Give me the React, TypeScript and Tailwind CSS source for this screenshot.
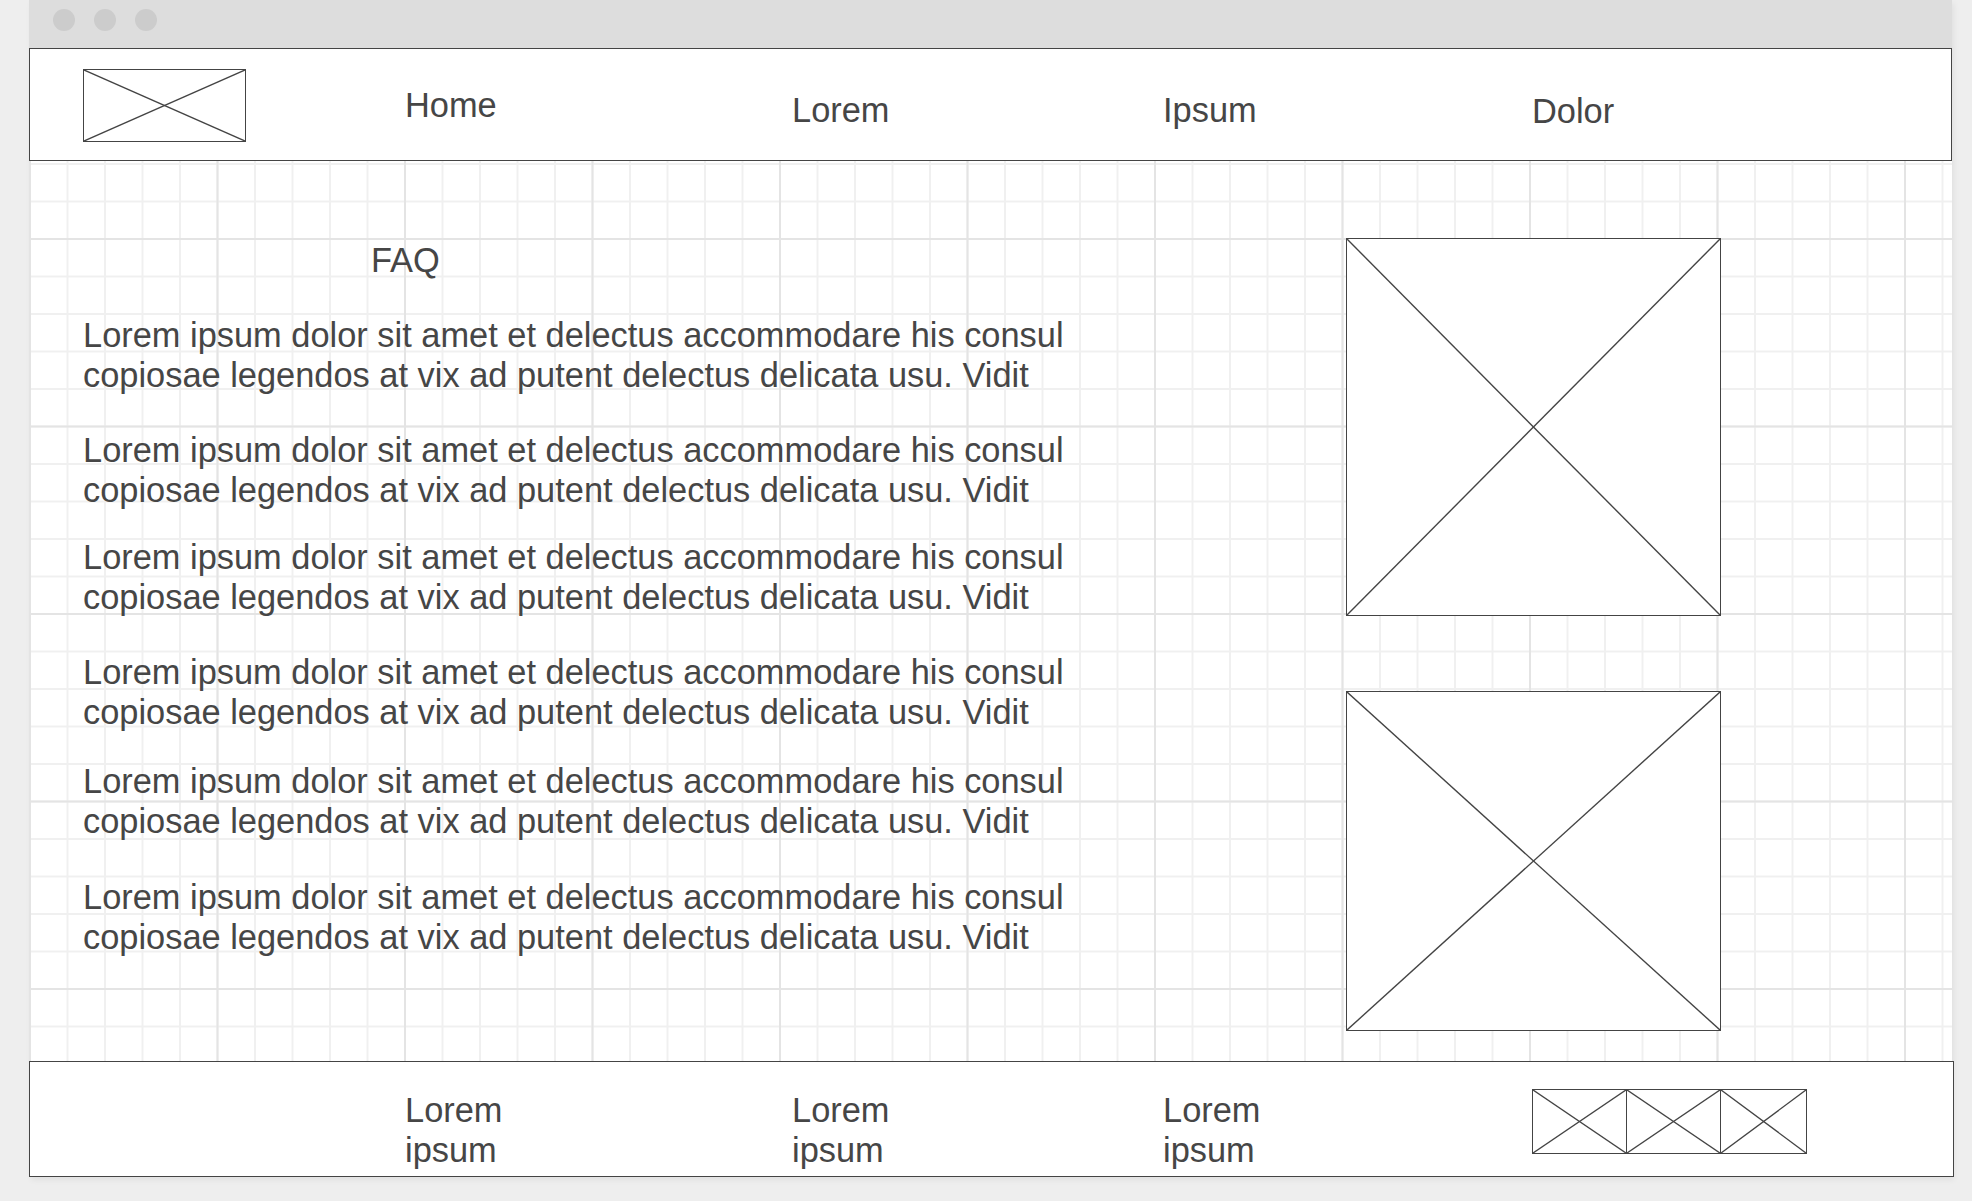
import React from 'react';

// Wireframe placeholder: a box with a cross through it
function XBox({ className = '' }: { className?: string }) {
  return (
    <div className={'border border-[#444444] bg-white ' + className}>
      <svg viewBox="0 0 100 100" preserveAspectRatio="none" className="block h-full w-full">
        <line x1="0" y1="0" x2="100" y2="100" stroke="#444444" strokeWidth="1.4" vectorEffect="non-scaling-stroke" />
        <line x1="100" y1="0" x2="0" y2="100" stroke="#444444" strokeWidth="1.4" vectorEffect="non-scaling-stroke" />
      </svg>
    </div>
  );
}

const paragraphs = [
  'mt-[35px]',
  'mt-[35px]',
  'mt-[27px]',
  'mt-[35px]',
  'mt-[29px]',
  'mt-[36px]',
];

export default function App() {
  return (
    <div className="min-h-screen w-full bg-[#eeeeee] pb-[25px] font-['Liberation_Sans',Arial,sans-serif] text-[34.4px] leading-[40px] text-[#464646]">
      <div className="ml-[29px] w-[1923px] shadow-[2px_3px_6px_rgba(0,0,0,0.06)]">
        {/* Browser title bar */}
        <div className="flex h-[48px] items-start gap-[19px] bg-[#dddddd] pl-[24px] pt-[9px]">
          <span className="h-[22px] w-[22px] rounded-full bg-[#cccccc]" />
          <span className="h-[22px] w-[22px] rounded-full bg-[#cccccc]" />
          <span className="h-[22px] w-[22px] rounded-full bg-[#cccccc]" />
        </div>

        {/* Header */}
        <div className="flex h-[113px] items-start border border-[#444444] bg-white">
          <XBox className="ml-[53px] mt-[20px] h-[73px] w-[163px]" />
          <div className="ml-[159px] mt-[36px] w-[387px]">Home</div>
          <div className="mt-[41px] w-[371px]">Lorem</div>
          <div className="mt-[41px] w-[369px]">Ipsum</div>
          <div className="mt-[42px]">Dolor</div>
        </div>

        {/* Content on grid */}
        <div className="flex h-[900px] bg-white bg-[linear-gradient(to_right,#e4e4e4_2px,transparent_2px),linear-gradient(to_bottom,#e4e4e4_2px,transparent_2px),linear-gradient(to_right,#f0f0f0_2px,transparent_2px),linear-gradient(to_bottom,#f0f0f0_2px,transparent_2px)] [background-size:187.5px_187.5px,187.5px_187.5px,37.5px_37.5px,37.5px_37.5px] [background-position:0_0,0_77px,0_0,0_2px]">
          <div className="ml-[54px] w-[1263px] pt-[79px]">
            <div className="ml-[288px]">FAQ</div>
            {paragraphs.map((mt, i) => (
              <p key={i} className={mt + ' whitespace-nowrap'}>
                Lorem ipsum dolor sit amet et delectus accommodare his consul
                <br />
                copiosae legendos at vix ad putent delectus delicata usu. Vidit
              </p>
            ))}
          </div>
          <div className="flex w-[375px] flex-col pt-[77px]">
            <XBox className="h-[378px] w-[375px]" />
            <XBox className="mt-[75px] h-[340px] w-[375px]" />
          </div>
        </div>

        {/* Footer */}
        <div className="flex h-[116px] w-[1925px] items-start border border-[#444444] bg-white">
          <div className="ml-[375px] mt-[28px] w-[387px]">
            Lorem
            <br />
            ipsum
          </div>
          <div className="mt-[28px] w-[371px]">
            Lorem
            <br />
            ipsum
          </div>
          <div className="mt-[28px] w-[369px]">
            Lorem
            <br />
            ipsum
          </div>
          <div className="mt-[27px] flex h-[65px] w-[275px] border border-[#444444]">
            <XBox className="h-full w-[94px] border-0 border-r" />
            <XBox className="h-full w-[94px] border-0 border-r" />
            <XBox className="h-full flex-1 border-0" />
          </div>
        </div>
      </div>
    </div>
  );
}
